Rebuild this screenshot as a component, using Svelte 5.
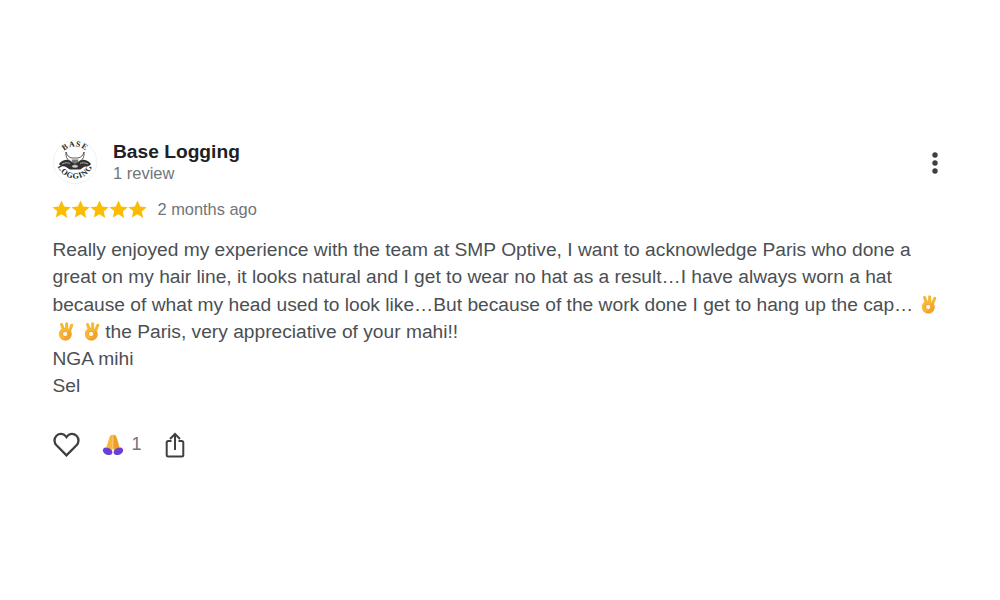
<script>
  const stars = [0, 1, 2, 3, 4];
</script>

{#snippet ok(cls)}
  <svg class={cls} viewBox="0 0 18 20" aria-hidden="true">
    <g fill="none" stroke="#f7b733" stroke-width="3.200" stroke-linecap="round">
      <path d="M6.500 7 4.800 2.600"/>
      <path d="M10.200 6.500V1.800"/>
      <path d="M13.600 8.500 15.600 3.400"/>
    </g>
    <circle cx="8.800" cy="12.800" r="6.800" fill="#f7b733"/>
    <path d="M12 8c2.500 1.500 3.800 3.800 3.200 6.400-.6 2.800-3 5-6 5-1.800 0-3.400-.7-4.600-1.900 4 .8 8.400-2.500 7.400-9.500z" fill="#f2a32c"/>
    <circle cx="8.600" cy="12.600" r="2.900" fill="#fff6e0" stroke="#ee9a28" stroke-width="1"/>
  </svg>
{/snippet}

<main class="review">
  <header class="head">
    <div class="who">
      <svg class="avatar" viewBox="0 0 44 44" aria-hidden="true">
        <circle cx="22" cy="22" r="21.700" fill="#fff" stroke="#e8e8e8" stroke-width=".6"/>
        <path id="arcTop" d="M6.500 22 A15.500 15.500 0 0 1 37.500 22" fill="none"/>
        <path id="arcBottom" d="M3.500 20 A18.500 18.500 0 0 0 40.500 20" fill="none"/>
        <text class="logo"><textPath href="#arcTop" startOffset="50%" text-anchor="middle">BASE</textPath></text>
        <text class="logo"><textPath href="#arcBottom" startOffset="50%" text-anchor="middle">LOGGING</textPath></text>
        <path d="M13 12c1 3.500 3 5.500 6 6h6c3-.5 5-2.500 6-6 .5 4.500-1 7.500-4 9.500l-2 4h-6l-2-4c-3-2-4.500-5-4-9.500z" fill="#fff" stroke="#333" stroke-width=".8"/>
        <path d="M18.500 19.500h7l-1.500 5h-4z" fill="#777"/>
        <path d="M6 24c3-4 8-5 11-3.500l5 3.500 5-3.500c3-1.500 8-.5 11 3.500-1 2.200-4.500 2.200-6.500 2.700-2 .5-3 2.800-5 2.800h-9c-2 0-3-2.300-5-2.800-2-.5-5.500-.5-6.500-2.700z" fill="#333"/>
        <path d="M9 24c3-1.500 6-1.500 8-.5M35 24c-3-1.500-6-1.500-8-.5" fill="none" stroke="#ddd" stroke-width=".7"/>
        <ellipse cx="22" cy="26.300" rx="3.200" ry="1.800" fill="#ccc" stroke="#222" stroke-width=".6"/>
      </svg>
      <div class="names">
        <div class="name">Base Logging</div>
        <div class="count">1 review</div>
      </div>
    </div>
    <svg class="more" viewBox="0 0 6 22" aria-hidden="true">
      <circle cx="3" cy="3" r="2.700"/><circle cx="3" cy="11" r="2.700"/><circle cx="3" cy="19" r="2.700"/>
    </svg>
  </header>

  <div class="rating">
    <span class="stars">
      {#each stars as s (s)}
        <svg class="star" viewBox="0 0 20 20" aria-hidden="true">
          <path d="M10 .6l2.800 6.300 6.900.7-5.200 4.600 1.500 6.800L10 15l-6 3.500 1.500-6.800L.3 7.600l6.900-.7z"/>
        </svg>
      {/each}
    </span>
    <span class="when">2 months ago</span>
  </div>

  <p class="body">
    Really enjoyed my experience with the team at SMP Optive, I want to acknowledge Paris who done a great on my hair line, it looks natural and I get to wear no hat as a result…I have always worn a hat because of what my head used to look like…But because of the work done I get to hang up the cap… {@render ok("ok first")} {@render ok("ok")} {@render ok("ok")} the Paris, very appreciative of your mahi!!<br />NGA mihi<br />Sel
  </p>

  <footer class="actions">
    <svg class="heart" viewBox="0 0 28 26" aria-hidden="true">
      <path d="M14 24.300 3.600 13.800C.8 11 .9 6.600 3.600 3.900c2.800-2.700 7.200-2.500 9.600.4l.8 1 .8-1c2.400-2.900 6.800-3.100 9.600-.4 2.700 2.700 2.800 7.100 0 9.900z"/>
    </svg>
    <span class="reaction">
      <svg class="pray" viewBox="0 0 22 22" aria-hidden="true">
        <path d="M10.800 .8c-2 0-3 1-3.400 2.700L4.500 13l4.500 4 1.800-2z" fill="#f8b73c"/>
        <path d="M11.200 .8c2 0 3 1 3.400 2.700l2.900 9.500-4.500 4-1.800-2z" fill="#f09c28"/>
        <ellipse cx="5.600" cy="17.300" rx="5" ry="3.500" transform="rotate(25 5.600 17.300)" fill="#6a3fd8"/>
        <ellipse cx="16.400" cy="17.300" rx="5" ry="3.500" transform="rotate(-25 16.400 17.300)" fill="#6a3fd8"/>
      </svg>
      <span class="n">1</span>
    </span>
    <svg class="share" viewBox="0 0 20 26" aria-hidden="true">
      <path d="M6.500 9H3.200a1.500 1.500 0 0 0-1.500 1.500v12.500a1.500 1.500 0 0 0 1.500 1.500h13.600a1.500 1.500 0 0 0 1.500-1.500V10.500A1.500 1.500 0 0 0 16.800 9h-3.300"/>
      <path d="M10 18V2.500M5 7l5-5 5 5"/>
    </svg>
  </footer>
</main>

<style>
  :global(body) { background: #fff; }
  .review {
    box-sizing: border-box;
    width: 1000px;
    height: 600px;
    padding: 140px 62px 0 52.500px;
    font-family: "Liberation Sans", Arial, sans-serif;
    color: #4b4f54;
  }
  .head { display: flex; justify-content: space-between; align-items: center; }
  .who { display: flex; align-items: center; gap: 16.500px; }
  .avatar { width: 44px; height: 44px; display: block; }
  .logo { font: 700 8px "Liberation Serif", serif; letter-spacing: .8px; fill: #222; }
  .names { display: flex; flex-direction: column; margin-top: -1px; }
  .name { font-size: 19.200px; font-weight: 700; line-height: 23px; color: #202124; }
  .count { font-size: 16.500px; line-height: 20px; color: #70757a; }
  .more { width: 6px; height: 22px; fill: #3c4043; margin-top: 1px; }
  .rating { display: flex; align-items: center; gap: 11px; margin-top: 13px; height: 24px; }
  .stars { display: flex; margin-left: -1px; }
  .star { width: 19px; height: 19px; fill: #fbbc04; display: block; }
  .when { font-size: 16.400px; color: #70757a; }
  .body { margin: 15px -10px 0 0; font-size: 19.200px; line-height: 27.300px; }
  .ok { width: 17px; height: 19px; vertical-align: -3px; margin-left: 4px; }
  .first { margin-left: 1px; }
  .actions { display: flex; align-items: center; margin-top: 32px; }
  .heart { width: 27px; height: 25px; fill: none; stroke: #3c4043; stroke-width: 2.400; }
  .reaction { display: flex; align-items: center; gap: 8px; margin-left: 22px; }
  .pray { width: 22px; height: 22px; }
  .n { font-size: 18px; color: #70757a; }
  .share { width: 20px; height: 26px; margin-left: 23px; fill: none; stroke: #3c4043; stroke-width: 2; }
</style>
